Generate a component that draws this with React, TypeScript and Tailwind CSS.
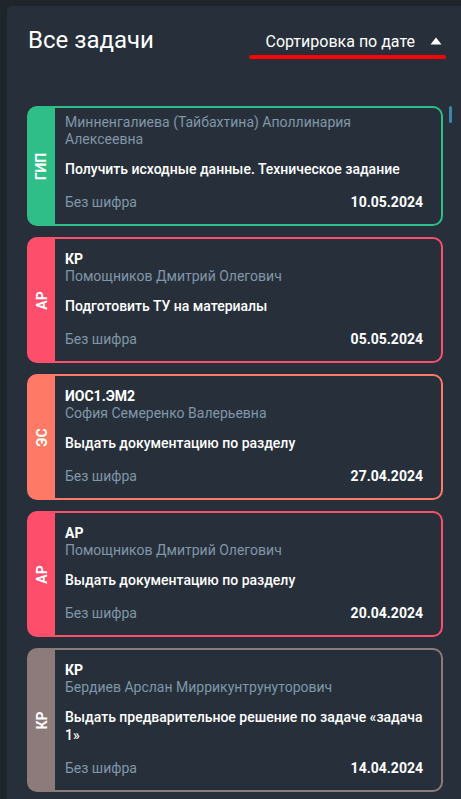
import React from "react";

interface Task {
  dept: string;
  color: string;
  code?: string;
  person: string;
  title: string;
  date: string;
}

const TASKS: Task[] = [
  {
    dept: "ГИП",
    color: "bg-[#2fbd88] border-[#2fbd88]",
    person: "Минненгалиева (Тайбахтина) Аполлинария Алексеевна",
    title: "Получить исходные данные. Техническое задание",
    date: "10.05.2024",
  },
  {
    dept: "АР",
    color: "bg-[#fd4f6c] border-[#fd4f6c]",
    code: "КР",
    person: "Помощников Дмитрий Олегович",
    title: "Подготовить ТУ на материалы",
    date: "05.05.2024",
  },
  {
    dept: "ЭС",
    color: "bg-[#ff7a66] border-[#ff7a66]",
    code: "ИОС1.ЭМ2",
    person: "София Семеренко Валерьевна",
    title: "Выдать документацию по разделу",
    date: "27.04.2024",
  },
  {
    dept: "АР",
    color: "bg-[#fd4f6c] border-[#fd4f6c]",
    code: "АР",
    person: "Помощников Дмитрий Олегович",
    title: "Выдать документацию по разделу",
    date: "20.04.2024",
  },
  {
    dept: "КР",
    color: "bg-[#8d7b7b] border-[#8d7b7b]",
    code: "КР",
    person: "Бердиев Арслан Миррикунтрунуторович",
    title: "Выдать предварительное решение по задаче «задача 1»",
    date: "14.04.2024",
  },
];

const TaskCard: React.FC<{ task: Task }> = ({ task }) => (
  <div className={`flex rounded-[10px] border-2 overflow-hidden ${task.color}`}>
    {/* Department stripe */}
    <div className="w-[26px] flex-shrink-0 flex items-center justify-center">
      <span className="-rotate-90 whitespace-nowrap text-[14px] font-bold text-white">
        {task.dept}
      </span>
    </div>

    {/* Body */}
    <div
      className={`flex-1 min-w-0 flex flex-col bg-[#27303a] pl-[10px] pr-[18px] pb-[13px] text-[14px] leading-[17px] ${
        task.code ? "pt-[12px]" : "pt-[6px]"
      }`}
    >
      {task.code && <div className="font-bold text-white">{task.code}</div>}
      <div className="text-[#8196a8]">{task.person}</div>
      <div className="mt-[12px] leading-[18px] font-medium text-white">{task.title}</div>
      <div className="mt-[16px] flex items-center justify-between">
        <span className="text-[#8196a8]">Без шифра</span>
        <span className="font-bold text-white">{task.date}</span>
      </div>
    </div>
  </div>
);

export default function App() {
  return (
    <div className="h-screen overflow-hidden flex bg-[#1e262c] font-['Roboto',sans-serif]">
      <div className="flex-1 min-w-0 ml-[7px] mt-[6px] rounded-tl-[5px] bg-[#27303a] pl-[20px] pr-[9px] pt-[20px]">
        {/* Header */}
        <div className="flex items-start justify-between pr-[6px]">
          <h1 className="pl-[1px] text-[24px] leading-[28px] font-normal text-white">
            Все задачи
          </h1>
          <div className="mt-[6px] flex flex-col">
            <div className="flex items-center pl-[16px] pr-[4px] h-[20px]">
              <span className="text-[16px] leading-[20px] text-white">
                Сортировка по дате
              </span>
              <svg
                className="ml-[15px] mt-[-2px]"
                width="12"
                height="8"
                viewBox="0 0 12 8"
              >
                <path d="M6 0.5 L11.5 7.5 L0.5 7.5 Z" fill="#ffffff" />
              </svg>
            </div>
            <div className="mt-[3px] h-[4px] rounded-full bg-[#ff0000]" />
          </div>
        </div>

        {/* Task list */}
        <div className="mt-[47px] flex items-start gap-[6px]">
          <div className="w-[416px] flex flex-col gap-[11px]">
            {TASKS.map((task, i) => (
              <TaskCard key={i} task={task} />
            ))}
          </div>
          <div className="w-[3px] h-[17px] rounded-full bg-[#3b86ab]" />
        </div>
      </div>
    </div>
  );
}
